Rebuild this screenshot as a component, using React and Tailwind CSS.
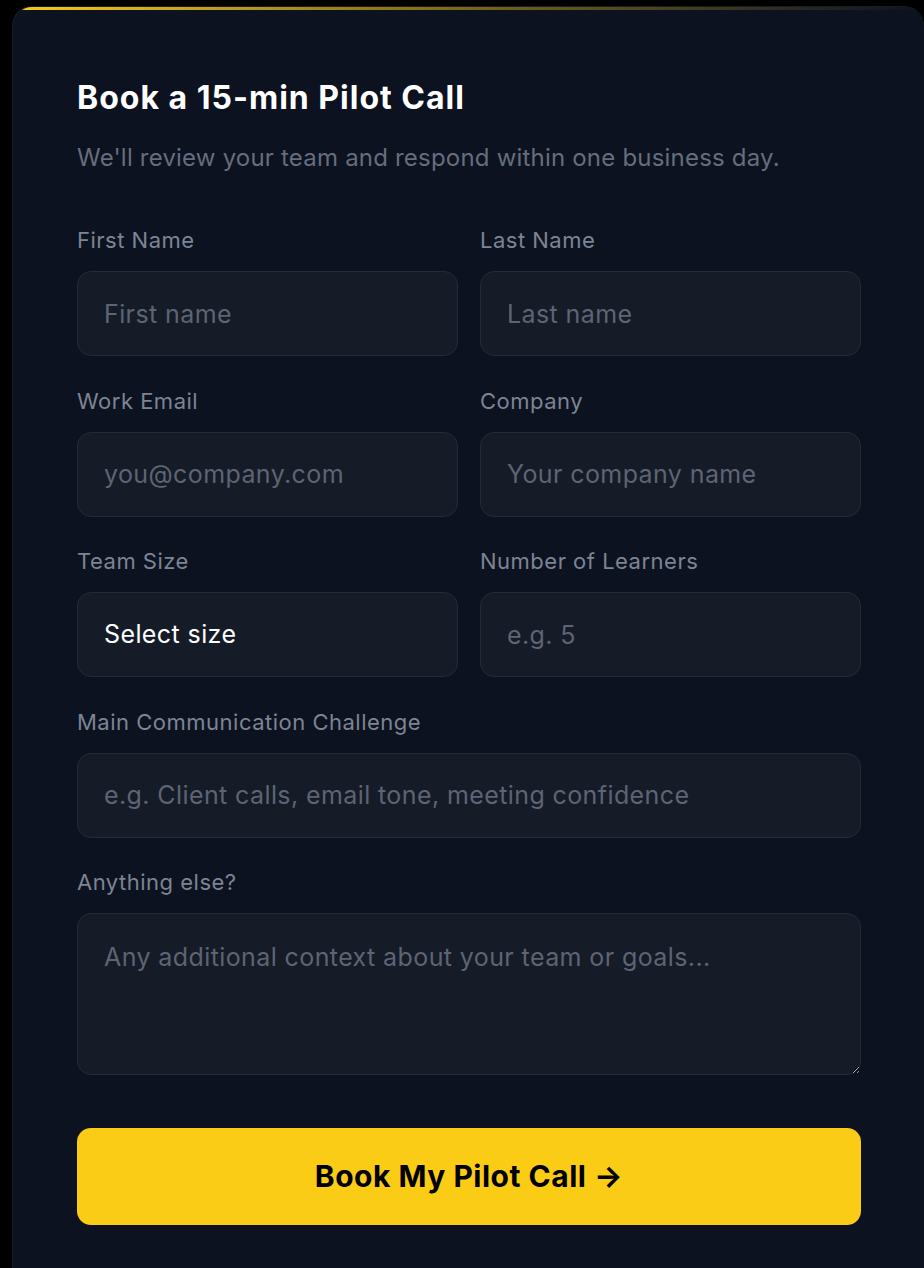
import React from "react";

const Field = ({ label, children }) => (
  <div className="flex flex-col">
    <label className="text-[22px] leading-[24px] tracking-[0.5px] text-[#7d8493] mb-[19px]">{label}</label>
    {children}
  </div>
);

const inputCls =
  "h-[85px] w-full rounded-[14px] border border-[#242a39] bg-[#161b28] px-[26px] text-[25px] tracking-[0.4px] text-white placeholder:text-[#5d6474] outline-none";

export default function App() {
  return (
    <div className="min-h-screen bg-black pt-[6px] pl-[12px]" style={{ fontFamily: "Inter, 'Noto Sans', sans-serif" }}>
      <div className="w-[912px] min-h-[1262px] overflow-hidden rounded-t-[20px] border-l border-t border-[#161c2a] bg-[#0c1220]">
        {/* gold accent along the top edge */}
        <div className="h-[3px] w-full bg-gradient-to-r from-[#facc15] via-[#a88a14]/70 to-transparent" />

        <form className="pl-[64px] pr-[63px] pt-[70px]" onSubmit={(e) => e.preventDefault()}>
          <h2 className="text-[32px] leading-[36px] font-bold text-white tracking-[1px]">Book a 15-min Pilot Call</h2>
          <p className="mt-[26px] text-[24px] leading-[32px] tracking-[0.2px] text-[#666d7c]">
            We'll review your team and respond within one business day.
          </p>

          <div className="mt-[54px] grid grid-cols-2 gap-x-[22px] gap-y-[32.5px]">
            <Field label="First Name">
              <input className={inputCls} placeholder="First name" />
            </Field>
            <Field label="Last Name">
              <input className={inputCls} placeholder="Last name" />
            </Field>
            <Field label="Work Email">
              <input className={inputCls} placeholder="you@company.com" />
            </Field>
            <Field label="Company">
              <input className={inputCls} placeholder="Your company name" />
            </Field>
            <Field label="Team Size">
              <select className={inputCls + " appearance-none"} defaultValue="">
                <option value="">Select size</option>
                <option>1-10</option>
                <option>11-50</option>
                <option>51-200</option>
                <option>200+</option>
              </select>
            </Field>
            <Field label="Number of Learners">
              <input className={inputCls} placeholder="e.g. 5" />
            </Field>
            <div className="col-span-2">
              <Field label="Main Communication Challenge">
                <input className={inputCls} placeholder="e.g. Client calls, email tone, meeting confidence" />
              </Field>
            </div>
            <div className="col-span-2">
              <Field label="Anything else?">
                <textarea
                  className="h-[162px] w-full resize-y rounded-[14px] border border-[#242a39] bg-[#161b28] px-[26px] pt-[28px] pb-[20px] text-[25px] leading-[30px] tracking-[0.4px] text-white placeholder:text-[#5d6474] outline-none"
                  placeholder="Any additional context about your team or goals..."
                />
              </Field>
            </div>
          </div>

          <button
            type="submit"
            className="mt-[53px] h-[97px] w-full rounded-[14px] bg-[#facc15] text-[30px] font-bold tracking-[0.5px] text-black"
          >
            Book My Pilot Call →
          </button>
        </form>
      </div>
    </div>
  );
}
